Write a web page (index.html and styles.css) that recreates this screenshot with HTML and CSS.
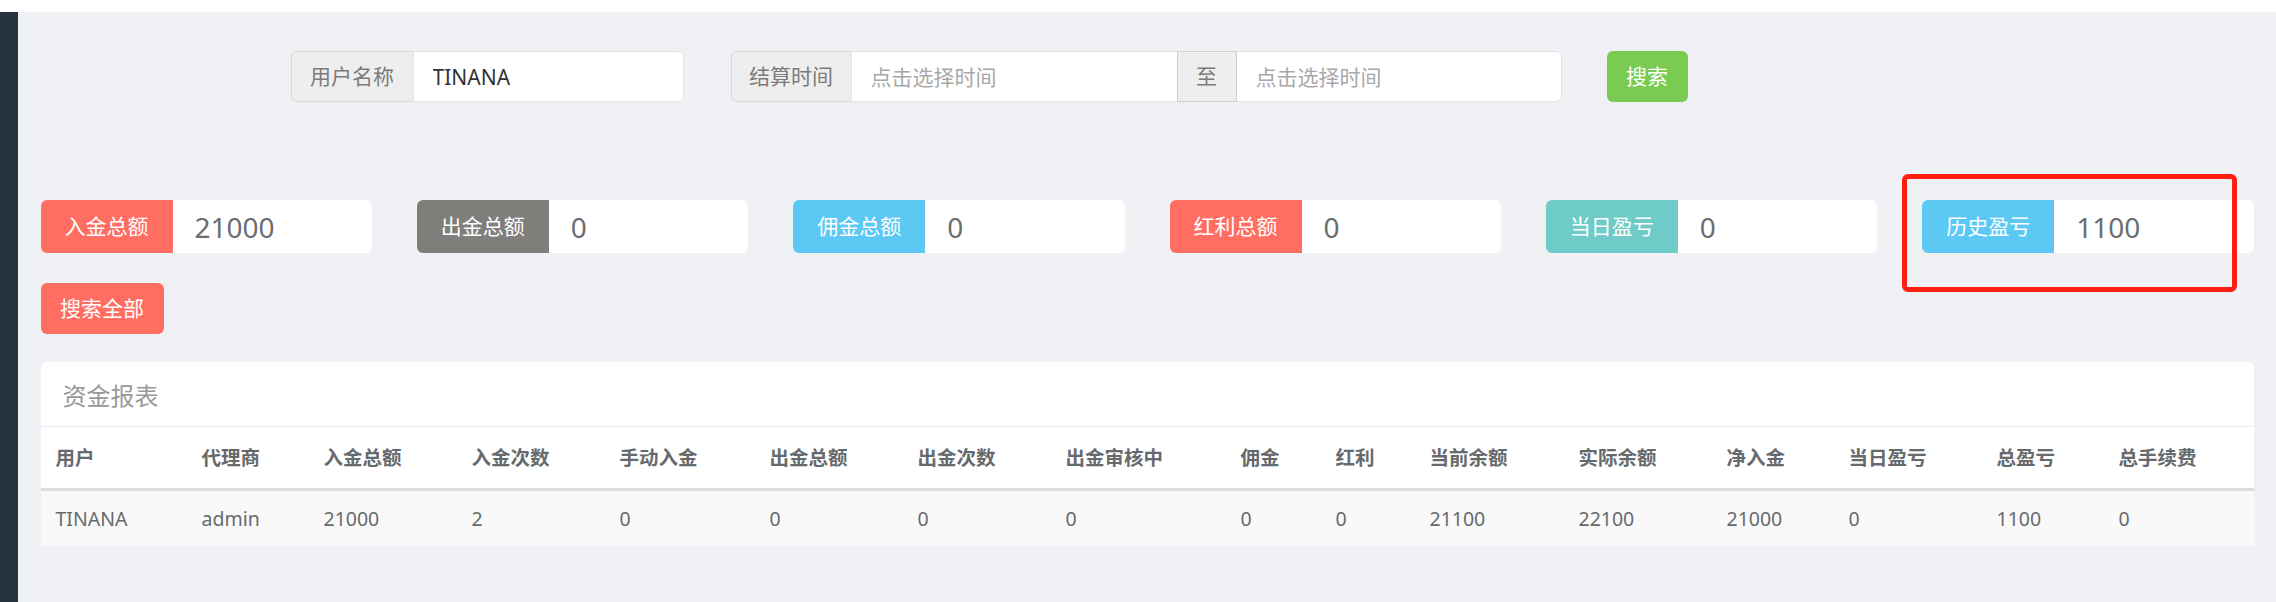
FILE: index.html
```html
<!DOCTYPE html>
<html lang="zh-CN">
<head>
<meta charset="utf-8">
<title>资金报表</title>
<link rel="stylesheet" href="styles.css">
</head>
<body>
<div class="topbar"></div>
<div class="layout">
  <aside class="sidebar"></aside>
  <main class="main">
    <form class="search-row">
      <div class="igroup">
        <span class="addon addon-name">用户名称</span>
        <input class="field field-name" type="text" value="TINANA">
      </div>
      <div class="igroup">
        <span class="addon addon-time">结算时间</span>
        <input class="field field-date" type="text" placeholder="点击选择时间">
        <span class="addon addon-to">至</span>
        <input class="field field-date2" type="text" placeholder="点击选择时间">
      </div>
      <button class="btn btn-green btn-search" type="button">搜索</button>
    </form>

    <div class="stats">
      <div class="stat-cell">
        <div class="stat"><span class="stat-label bg-coral">入金总额</span><span class="stat-value">21000</span></div>
      </div>
      <div class="stat-cell">
        <div class="stat"><span class="stat-label bg-gray">出金总额</span><span class="stat-value">0</span></div>
      </div>
      <div class="stat-cell">
        <div class="stat"><span class="stat-label bg-blue">佣金总额</span><span class="stat-value">0</span></div>
      </div>
      <div class="stat-cell">
        <div class="stat"><span class="stat-label bg-coral">红利总额</span><span class="stat-value">0</span></div>
      </div>
      <div class="stat-cell">
        <div class="stat"><span class="stat-label bg-teal">当日盈亏</span><span class="stat-value">0</span></div>
      </div>
      <div class="stat-cell">
        <div class="stat"><span class="stat-label bg-blue">历史盈亏</span><span class="stat-value">1100</span></div>
        <span class="annot"></span>
      </div>
    </div>

    <div class="actions">
      <button class="btn btn-coral btn-all" type="button">搜索全部</button>
    </div>

    <section class="ibox">
      <div class="ibox-title">资金报表</div>
      <table class="report">
        <colgroup>
          <col class="c1"><col class="c2"><col class="c3"><col class="c4"><col class="c5"><col class="c6"><col class="c7"><col class="c8"><col class="c9"><col class="c10"><col class="c11"><col class="c12"><col class="c13"><col class="c14"><col class="c15"><col class="c16">
        </colgroup>
        <thead>
          <tr>
            <th>用户</th><th>代理商</th><th>入金总额</th><th>入金次数</th><th>手动入金</th><th>出金总额</th><th>出金次数</th><th>出金审核中</th><th>佣金</th><th>红利</th><th>当前余额</th><th>实际余额</th><th>净入金</th><th>当日盈亏</th><th>总盈亏</th><th>总手续费</th>
          </tr>
        </thead>
        <tbody>
          <tr>
            <td>TINANA</td><td>admin</td><td>21000</td><td>2</td><td>0</td><td>0</td><td>0</td><td>0</td><td>0</td><td>0</td><td>21100</td><td>22100</td><td>21000</td><td>0</td><td>1100</td><td>0</td>
          </tr>
        </tbody>
      </table>
    </section>
  </main>
</div>
</body>
</html>
```

FILE: styles.css
```css
* { box-sizing: border-box; }

html, body {
  margin: 0;
  padding: 0;
  height: 100%;
}

body {
  font-family: "Noto Sans", "Noto Sans CJK SC", sans-serif;
  color: #676a6c;
  background: #eff1f5;
  overflow: hidden;
}

.topbar {
  height: 12px;
  background: #ffffff;
}

.layout {
  display: flex;
  min-height: 590px;
}

.sidebar {
  width: 18px;
  flex: none;
  background: #27333f;
}

.main {
  flex: 1;
  padding: 39px 22.5px 0 22.5px;
  background: #eff1f5;
}

/* search row */
.search-row {
  display: flex;
  align-items: stretch;
  height: 51px;
  margin: 0;
  padding-left: 250px;
}

.igroup {
  display: flex;
  height: 51px;
  margin-right: 47px;
}

.addon {
  display: flex;
  align-items: center;
  justify-content: center;
  height: 51px;
  background: #eeeeee;
  border: 1px solid #d9d9d9;
  color: #7b7b7b;
  font-size: 21px;
  line-height: 1;
}

.igroup .addon:first-child {
  border-radius: 6px 0 0 6px;
  border-right: 0;
}

.field {
  height: 51px;
  border: 1px solid #e3e4e6;
  background: #ffffff;
  padding: 0 19px;
  font-family: "Noto Sans", "Noto Sans CJK SC", sans-serif;
  font-size: 21px;
  color: #333333;
  outline: none;
  margin: 0;
}

.field::placeholder {
  color: #a8a8a8;
}

.igroup .field:last-child {
  border-radius: 0 6px 6px 0;
}

.addon-name { width: 122px; }
.field-name { width: 271px; }
.addon-time { width: 120px; }
.field-date { width: 326px; border-right: 0; }
.addon-to { width: 60px; border-color: #cfcfcf; }
.field-date2 { width: 325px; border-left: 0; }

.btn {
  border: 0;
  border-radius: 6px;
  color: #ffffff;
  font-family: "Noto Sans", "Noto Sans CJK SC", sans-serif;
  font-size: 21px;
  line-height: 1;
  height: 51px;
  padding: 0;
  cursor: pointer;
}

.btn-green { background: #7acb51; }
.btn-coral { background: #ff6e61; }

.btn-search {
  width: 81px;
  margin-left: -2px;
}

/* stats */
.stats {
  display: grid;
  grid-template-columns: repeat(6, 1fr);
  column-gap: 45px;
  margin-top: 98px;
}

.stat-cell {
  position: relative;
}

.stat {
  display: flex;
  height: 53px;
  background: #ffffff;
  border-radius: 6px;
  overflow: hidden;
}

.stat-label {
  width: 132px;
  flex: none;
  display: flex;
  align-items: center;
  justify-content: center;
  color: #ffffff;
  font-size: 21px;
  line-height: 1;
}

.stat-value {
  display: flex;
  align-items: center;
  padding-left: 22px;
  font-size: 28px;
  color: #6b6d70;
  line-height: 1;
}

.bg-coral { background: #ff6e61; }
.bg-gray { background: #807e7b; }
.bg-blue { background: #5bc9f4; }
.bg-teal { background: #6ecbc8; }

.annot {
  position: absolute;
  left: -20px;
  top: -26px;
  width: 335px;
  height: 118px;
  border: 5px solid #ff1e12;
  border-radius: 6px;
  pointer-events: none;
  z-index: 2;
}

/* actions */
.actions {
  margin-top: 30px;
  display: flex;
}

.btn-all {
  width: 123px;
}

/* panel */
.ibox {
  margin-top: 28px;
  background: #ffffff;
  border-radius: 6px 6px 0 0;
  overflow: hidden;
}

.ibox-title {
  height: 65px;
  padding: 0 22px;
  display: flex;
  align-items: center;
  font-size: 24px;
  color: #999999;
  border-bottom: 1px solid #e9ebee;
}

.report {
  width: 100%;
  table-layout: fixed;
  border-collapse: collapse;
  font-size: 19.5px;
  color: #676a6c;
}

.report th,
.report td {
  text-align: left;
  padding: 0 0 0 15px;
  white-space: nowrap;
  line-height: 1;
}

.report th {
  height: 62px;
  font-weight: bold;
  border-bottom: 3px solid #dddddd;
}

.report td {
  height: 57px;
  background: #f9f9f9;
}

.c1 { width: 146px; }
.c2 { width: 122px; }
.c3 { width: 148px; }
.c4 { width: 148px; }
.c5 { width: 150px; }
.c6 { width: 148px; }
.c7 { width: 148px; }
.c8 { width: 175px; }
.c9 { width: 95px; }
.c10 { width: 94px; }
.c11 { width: 149px; }
.c12 { width: 148px; }
.c13 { width: 122px; }
.c14 { width: 148px; }
.c15 { width: 122px; }
.c16 { width: auto; }
```
